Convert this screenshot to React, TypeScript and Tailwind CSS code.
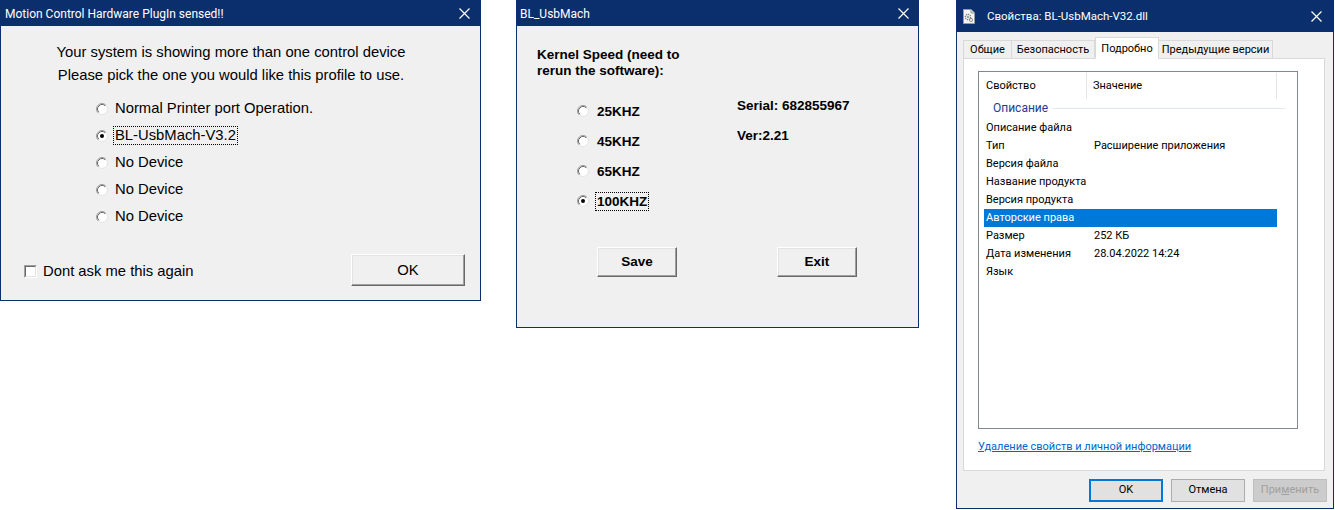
import React from "react";

const NAVY = "bg-[#0b2f6c]";

function Radio({ checked }: { checked?: boolean }) {
  return (
    <svg width="12" height="12" viewBox="0 0 12 12" className="shrink-0">
      <circle cx="6" cy="6" r="5.5" fill="#ffffff" stroke="#e3e3e3" strokeWidth="1" />
      <path d="M2.11 9.89 A5.5 5.5 0 0 1 9.89 2.11" fill="none" stroke="#a0a0a0" strokeWidth="1" />
      <path d="M2.82 9.18 A4.5 4.5 0 0 1 9.18 2.82" fill="none" stroke="#696969" strokeWidth="1" />
      {checked && <circle cx="6" cy="6" r="2" fill="#000000" />}
    </svg>
  );
}

function CloseX({ size = 11 }: { size?: number }) {
  return (
    <svg width={size} height={size} viewBox="0 0 11 11">
      <path d="M0.5 0.5 L10.5 10.5 M10.5 0.5 L0.5 10.5" stroke="#ffffff" strokeWidth="1.2" />
    </svg>
  );
}

const classicBtn =
  "flex items-center justify-center border border-t-white border-l-white border-r-[#696969] border-b-[#696969] bg-[#f0f0f0] shadow-[inset_-1px_-1px_0_#a0a0a0,inset_1px_1px_0_#e3e3e3]";

function Dialog1() {
  const items = [
    "Normal Printer port Operation.",
    "BL-UsbMach-V3.2",
    "No Device",
    "No Device",
    "No Device",
  ];
  return (
    <div className="w-[481px] h-[301px] border border-[#0b2f6c] bg-[#f0f0f0] flex flex-col shrink-0 whitespace-nowrap">
      <div className={`${NAVY} h-[25px] flex items-center justify-between pl-[4px] pr-[10px] text-white text-[12px] font-['Roboto',sans-serif]`}>
        <span>Motion Control Hardware PlugIn sensed!!</span>
        <CloseX />
      </div>
      <div className="flex flex-col font-['Liberation_Sans',Arial,sans-serif] text-[14.8px] text-black">
        <div className="mt-[15px] ml-[48px] w-[364px] text-center">
          <div className="h-[23px] leading-[23px]">Your system is showing more than one control device</div>
          <div className="h-[23px] leading-[23px]">Please pick the one you would like this profile to use.</div>
        </div>
        <div className="mt-[8px] ml-[95px] flex flex-col">
          {items.map((t, i) => (
            <div key={i} className="h-[27px] flex items-center gap-[5px]">
              <Radio checked={i === 1} />
              <span
                className={
                  i === 1
                    ? "border border-dotted border-black px-[1px] leading-[17px]"
                    : "border border-transparent px-[1px] leading-[17px]"
                }
              >
                {t}
              </span>
            </div>
          ))}
        </div>
        <div className="mt-[24px] flex items-center justify-between pl-[23px] pr-[15px]">
          <div className="flex items-center gap-[6px] mt-[3px]">
            <div className="w-[13px] h-[13px] border border-t-[#a0a0a0] border-l-[#a0a0a0] border-r-white border-b-white">
              <div className="w-full h-full bg-white border border-t-[#696969] border-l-[#696969] border-r-[#e3e3e3] border-b-[#e3e3e3]" />
            </div>
            <span>Dont ask me this again</span>
          </div>
          <div className={`${classicBtn} w-[114px] h-[32px]`}>OK</div>
        </div>
      </div>
    </div>
  );
}

function Dialog2() {
  const speeds = ["25KHZ", "45KHZ", "65KHZ", "100KHZ"];
  return (
    <div className="ml-[35px] w-[403px] h-[328px] border border-[#0b2f6c] bg-[#f0f0f0] flex flex-col shrink-0 whitespace-nowrap">
      <div className={`${NAVY} h-[25px] flex items-center justify-between pl-[3px] pr-[9px] text-white text-[12px] font-['Roboto',sans-serif]`}>
        <span>BL_UsbMach</span>
        <CloseX />
      </div>
      <div className="flex flex-col font-['Liberation_Sans',Arial,sans-serif] font-bold text-[13.5px] text-black">
        <div className="mt-[21px] ml-[20px] leading-[16px]">
          <div>Kernel Speed (need to</div>
          <div>rerun the software):</div>
        </div>
        <div className="flex items-start">
          <div className="mt-[17px] ml-[60px] flex flex-col w-[160px]">
            {speeds.map((s, i) => (
              <div key={s} className="h-[30px] flex items-center gap-[6px]">
                <Radio checked={i === 3} />
                <span
                  className={
                    i === 3
                      ? "border border-dotted border-black px-[1px] leading-[17px]"
                      : "border border-transparent px-[1px] leading-[17px]"
                  }
                >
                  {s}
                </span>
              </div>
            ))}
          </div>
          <div className="mt-[12px] flex flex-col">
            <div className="h-[30px] flex items-center">Serial: 682855967</div>
            <div className="h-[30px] flex items-center">Ver:2.21</div>
          </div>
        </div>
        <div className="mt-[31px] ml-[80px] flex items-center gap-[100px]">
          <div className={`${classicBtn} w-[80px] h-[30px]`}>Save</div>
          <div className={`${classicBtn} w-[80px] h-[30px]`}>Exit</div>
        </div>
      </div>
    </div>
  );
}

function FileIcon() {
  return (
    <svg width="12" height="15" viewBox="0 0 12 15">
      <path d="M0.5 0.5 H8 L11.5 4 V14.5 H0.5 Z" fill="#f4f4f4" stroke="#9a9a9a" />
      <path d="M8 0.5 V4 H11.5" fill="#dcdcdc" stroke="#9a9a9a" />
      <circle cx="5" cy="8" r="2.6" fill="none" stroke="#7d7d7d" strokeWidth="1.4" strokeDasharray="1.2 0.8" />
      <circle cx="5" cy="8" r="0.9" fill="#7d7d7d" />
      <circle cx="8" cy="11" r="1.6" fill="none" stroke="#8d8d8d" strokeWidth="1" />
    </svg>
  );
}

function Dialog3() {
  const rows: [string, string][] = [
    ["Описание файла", ""],
    ["Тип", "Расширение приложения"],
    ["Версия файла", ""],
    ["Название продукта", ""],
    ["Версия продукта", ""],
    ["Авторские права", ""],
    ["Размер", "252 КБ"],
    ["Дата изменения", "28.04.2022 14:24"],
    ["Язык", ""],
  ];
  const tabs = ["Общие", "Безопасность", "Подробно", "Предыдущие версии"];
  const tabW = ["w-[49px]", "w-[83px]", "w-[64px]", "w-[114px]"];
  return (
    <div className="ml-[37px] w-[378px] h-[509px] border border-[#0b2f6c] bg-[#f0f0f0] flex flex-col shrink-0 whitespace-nowrap font-['Roboto',sans-serif] text-[11px] text-black">
      <div className={`${NAVY} h-[31px] flex items-center justify-between pl-[6px] pr-[11px] text-white text-[11.5px]`}>
        <div className="flex items-center gap-[12px]">
          <FileIcon />
          <span>Свойства: BL-UsbMach-V32.dll</span>
        </div>
        <CloseX />
      </div>
      <div className="flex flex-col pl-[6px]">
        <div className="mt-[5px] h-[21px] flex items-end">
          {tabs.map((t, i) =>
            i === 2 ? (
              <div
                key={t}
                className={`${tabW[i]} h-[22px] -mb-[1px] relative z-10 bg-white border border-[#d9d9d9] border-b-white flex items-start justify-center pt-[3px]`}
              >
                {t}
              </div>
            ) : (
              <div
                key={t}
                className={`${tabW[i]} h-[18px] pt-[1px] bg-[#f0f0f0] border border-[#d9d9d9] border-b-0 ${i === 1 ? "border-l-0" : ""} ${i === 3 ? "border-l-0" : ""} flex items-center justify-center`}
              >
                {t}
              </div>
            )
          )}
        </div>
        <div className="w-[362px] h-[413px] bg-white border border-[#d9d9d9] flex flex-col">
          <div className="mt-[12px] ml-[14px] w-[320px] h-[358px] pt-[1px] border border-[#828790] bg-white flex flex-col">
            <div className="h-[26px] flex items-stretch">
              <div className="w-[108px] pl-[7px] flex items-center border-r border-[#e5e5e5]">Свойство</div>
              <div className="w-[190px] pl-[6px] flex items-center border-r border-[#e5e5e5]">Значение</div>
            </div>
            <div className="h-[18px] flex items-center pl-[14px] pr-[12px] gap-[5px]">
              <span className="text-[#1e3c96] text-[12px]">Описание</span>
              <div className="flex-1 h-px bg-[#e2e6ee]" />
            </div>
            <div className="mt-[2px] flex flex-col">
              {rows.map(([k, v]) => {
                const sel = k === "Авторские права";
                return (
                  <div
                    key={k}
                    className={`h-[18px] ml-[5px] w-[293px] flex items-center pl-[2px] ${sel ? "bg-[#0078d7] text-white" : ""}`}
                  >
                    <span className="w-[108px] shrink-0">{k}</span>
                    <span>{v}</span>
                  </div>
                );
              })}
            </div>
          </div>
          <div className="mt-[10px] ml-[14px] text-[#0066cc] underline leading-[16px]">
            Удаление свойств и личной информации
          </div>
        </div>
        <div className="mt-[8px] flex justify-end gap-[8px] pr-[6px]">
          <div className="w-[74px] h-[23px] bg-[#e1e1e1] border-2 border-[#0078d7] flex items-center justify-center">OK</div>
          <div className="w-[74px] h-[23px] bg-[#e1e1e1] border border-[#adadad] flex items-center justify-center">Отмена</div>
          <div className="w-[74px] h-[23px] bg-[#cccccc] border border-[#bfbfbf] flex items-center justify-center text-[#a0a0a0]">
            <span>
              При<span className="underline">м</span>енить
            </span>
          </div>
        </div>
      </div>
    </div>
  );
}

export default function App() {
  return (
    <div className="w-[1335px] h-[510px] bg-white flex items-start overflow-hidden">
      <Dialog1 />
      <Dialog2 />
      <Dialog3 />
    </div>
  );
}
